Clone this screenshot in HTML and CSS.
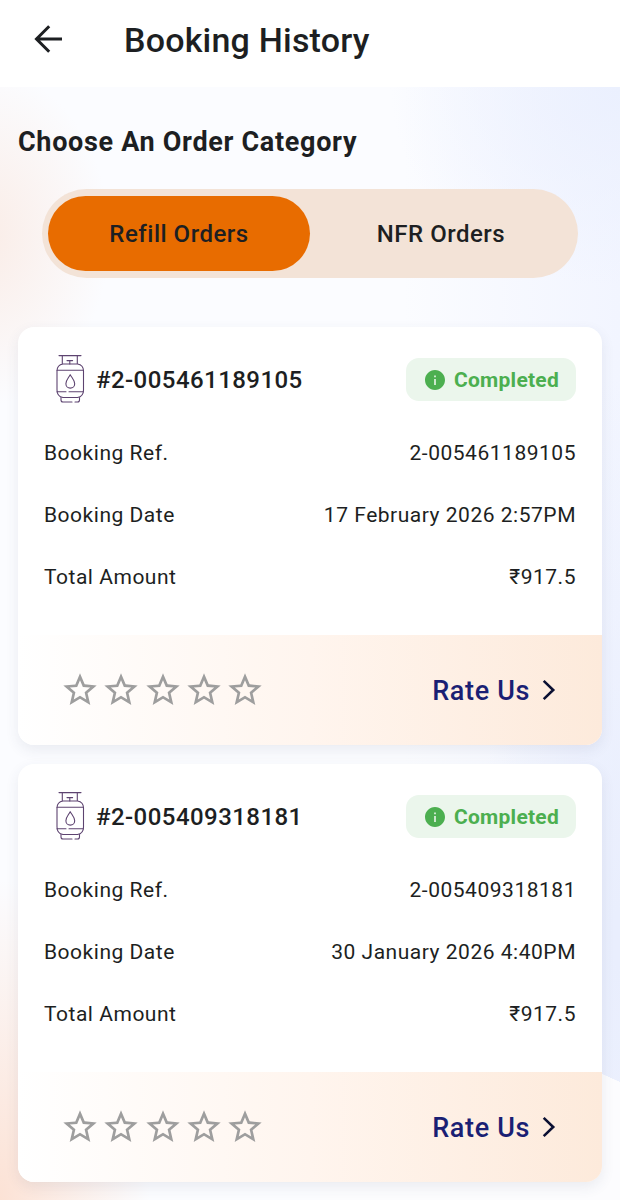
FILE: index.html
```html
<!DOCTYPE html>
<html lang="en">
<head>
<meta charset="utf-8">
<title>Booking History</title>
<link rel="stylesheet" href="styles.css">
</head>
<body>
<svg class="defs" width="0" height="0" aria-hidden="true">
  <symbol id="cylinder" viewBox="0 0 32 50">
    <g fill="none" stroke="#5d4370" stroke-width="1.1" stroke-linecap="round" stroke-linejoin="round">
      <path d="M5 1.6H27M8.3 1.6V9.5M23.3 1.6V9.5M13 6.6H18.6M15.8 6.6V10"/>
      <path d="M9 10H23.500Q29.500 11 29.500 17V36Q29.500 42.500 23.500 43.500H9Q3 42.500 3 36V17Q3 11 9 10Z"/>
      <path d="M3 16.300H29.500M3 37.800H12M15 37.800H29.500M7 43.500V46Q7 48 9 48H18M21 48H23.500Q25.500 48 25.500 46V43.500"/>
      <path d="M16.200 20.700C18.300 24.300 20.700 26.500 20.700 29.700A4.400 4.400 0 0 1 11.900 29.700C11.900 26.500 14.200 24.300 16.200 20.700Z"/>
    </g>
  </symbol>
  <symbol id="star" viewBox="0 0 24 24">
    <path fill="#9e9e9e" d="M22 9.240l-7.190-.62L12 2 9.190 8.630 2 9.240l5.460 4.730L5.820 21 12 17.270 18.180 21l-1.630-7.030L22 9.240zM12 15.400l-3.760 2.270 1-4.280-3.320-2.880 4.380-.38L12 6.100l1.710 4.040 4.380.38-3.320 2.880 1 4.280L12 15.400z"/>
  </symbol>
  <symbol id="info" viewBox="0 0 24 24">
    <path fill="#4caf50" d="M12 2C6.480 2 2 6.480 2 12s4.480 10 10 10 10-4.480 10-10S17.520 2 12 2zm.8 15h-1.600v-6h1.600v6zm0-7.800h-1.600V7.400h1.600v1.800z"/>
  </symbol>
  <symbol id="chevron" viewBox="0 0 14 22">
    <path fill="none" stroke="#0b1033" stroke-width="2.600" d="M1.700 1.900L11.200 11L1.700 20.100"/>
  </symbol>
</svg>

<header class="app-bar">
  <svg class="back" viewBox="0 0 28 28"><path fill="none" stroke="#1d1f22" stroke-width="3" d="M28 14H2.500M15.200 1.300L2.500 14L15.200 26.700"/></svg>
  <h1 class="title">Booking History</h1>
</header>

<main class="content">
  <h2 class="heading">Choose An Order Category</h2>
  <div class="tabs">
    <div class="tab tab-active">Refill Orders</div>
    <div class="tab">NFR Orders</div>
  </div>

  <section class="card">
    <div class="card-head">
      <svg class="cylinder"><use href="#cylinder"/></svg>
      <span class="order-id">#2-005461189105</span>
      <span class="badge"><svg class="info"><use href="#info"/></svg><span class="badge-text">Completed</span></span>
    </div>
    <dl class="details">
      <div class="row"><dt>Booking Ref.</dt><dd>2-005461189105</dd></div>
      <div class="row"><dt>Booking Date</dt><dd>17 February 2026 2:57PM</dd></div>
      <div class="row"><dt>Total Amount</dt><dd class="amount">₹917.5</dd></div>
    </dl>
    <div class="card-foot">
      <div class="stars">
        <svg class="star"><use href="#star"/></svg><svg class="star"><use href="#star"/></svg><svg class="star"><use href="#star"/></svg><svg class="star"><use href="#star"/></svg><svg class="star"><use href="#star"/></svg>
      </div>
      <div class="rate"><span class="rate-text">Rate Us</span><svg class="chevron"><use href="#chevron"/></svg></div>
    </div>
  </section>

  <section class="card">
    <div class="card-head">
      <svg class="cylinder"><use href="#cylinder"/></svg>
      <span class="order-id">#2-005409318181</span>
      <span class="badge"><svg class="info"><use href="#info"/></svg><span class="badge-text">Completed</span></span>
    </div>
    <dl class="details">
      <div class="row"><dt>Booking Ref.</dt><dd>2-005409318181</dd></div>
      <div class="row"><dt>Booking Date</dt><dd>30 January 2026 4:40PM</dd></div>
      <div class="row"><dt>Total Amount</dt><dd class="amount">₹917.5</dd></div>
    </dl>
    <div class="card-foot">
      <div class="stars">
        <svg class="star"><use href="#star"/></svg><svg class="star"><use href="#star"/></svg><svg class="star"><use href="#star"/></svg><svg class="star"><use href="#star"/></svg><svg class="star"><use href="#star"/></svg>
      </div>
      <div class="rate"><span class="rate-text">Rate Us</span><svg class="chevron"><use href="#chevron"/></svg></div>
    </div>
  </section>
</main>
</body>
</html>
```

FILE: styles.css
```css
* { box-sizing: border-box; }
body {
  margin: 0;
  height: 1200px;
  display: flex;
  flex-direction: column;
  overflow: hidden;
  font-family: Roboto, "Noto Sans", sans-serif;
  color: #1d1f22;
  background: #fff;
}
.defs { display: none; }
h1, h2, dl, dd { margin: 0; }

.app-bar {
  flex: none;
  height: 87px;
  display: flex;
  align-items: center;
  padding: 0 34px 8px;
  background: #fff;
}
.back { width: 28px; height: 28px; margin-top: -1px; }
.title {
  margin: 0 0 0 62px;
  font-size: 34px;
  line-height: 44px;
  font-weight: 500;
  letter-spacing: 0.2px;
  white-space: nowrap;
}

.content {
  flex: 1;
  display: flex;
  flex-direction: column;
  padding: 37px 18px 0;
  background:
    linear-gradient(to top right, #fcfcfe 49%, transparent 51%) 600px 986px / 20px 9px no-repeat,
    linear-gradient(#fcfcfe, #fcfcfe) 100% 995px / 300px 200px no-repeat,
    radial-gradient(ellipse 130px 170px at -20px 150px, #faece6, transparent),
    radial-gradient(ellipse 150px 320px at 0 1113px, #fce2d5, transparent),
    radial-gradient(ellipse 230px 200px at 100% 0, #ebf0fe, transparent),
    radial-gradient(ellipse 140px 560px at 100% 850px, #e9eefd 5%, transparent),
    linear-gradient(to right, transparent 65%, #f2f5ff),
    #fbfcff;
}
.heading {
  font-size: 27px;
  line-height: 36px;
  font-weight: 700;
  letter-spacing: 0.68px;
  white-space: nowrap;
}
.tabs {
  height: 89px;
  margin: 29px 24px 49px;
  padding: 7px 6px;
  display: flex;
  border-radius: 45px;
  background: #f3e3d7;
}
.tab {
  width: 262px;
  display: flex;
  align-items: center;
  justify-content: center;
  border-radius: 38px;
  font-size: 24px;
  font-weight: 500;
  letter-spacing: 0.5px;
  white-space: nowrap;
}
.tab-active { background: #e86c00; }

.card {
  flex: none;
  height: 418px;
  margin-bottom: 19px;
  display: flex;
  flex-direction: column;
  border-radius: 16px;
  overflow: hidden;
  background: #fff;
  box-shadow: 0 5px 14px rgba(60, 70, 100, 0.09);
}
.card-head {
  display: flex;
  align-items: center;
  height: 105px;
  padding: 0 26px 0 36px;
}
.cylinder { width: 32px; height: 50px; margin-top: -2px; }
.order-id {
  margin: 1px 0 0 10px;
  font-size: 24px;
  font-weight: 500;
  letter-spacing: 0.45px;
}
.badge {
  margin-left: auto;
  width: 170px;
  height: 43px;
  padding-left: 17px;
  display: flex;
  align-items: center;
  border-radius: 13px;
  background: #ebf6ec;
}
.info { width: 24px; height: 24px; }
.badge-text {
  margin: 1px 0 0 7px;
  color: #4caf50;
  font-size: 21px;
  font-weight: 700;
  letter-spacing: 0.25px;
}
.details { padding: 0 26px; flex: 1; margin-top: -10px; }
.row {
  height: 62px;
  display: flex;
  align-items: center;
  justify-content: space-between;
  font-size: 21px;
  letter-spacing: 0.52px;
  white-space: nowrap;
}
.card-foot {
  height: 110px;
  padding: 0 46px 0 42px;
  display: flex;
  align-items: center;
  justify-content: space-between;
  background: linear-gradient(to right, #fff, #fff5ee 50%, #fdeadb);
}
.stars { display: flex; gap: 1.300px; }
.star { width: 40px; height: 40px; }
.rate { display: flex; align-items: center; }
.rate-text {
  margin-top: 2px;
  color: #1a1f74;
  font-size: 27px;
  font-weight: 500;
  letter-spacing: 0.65px;
}
.chevron { width: 14px; height: 22px; margin-left: 12px; }
```
